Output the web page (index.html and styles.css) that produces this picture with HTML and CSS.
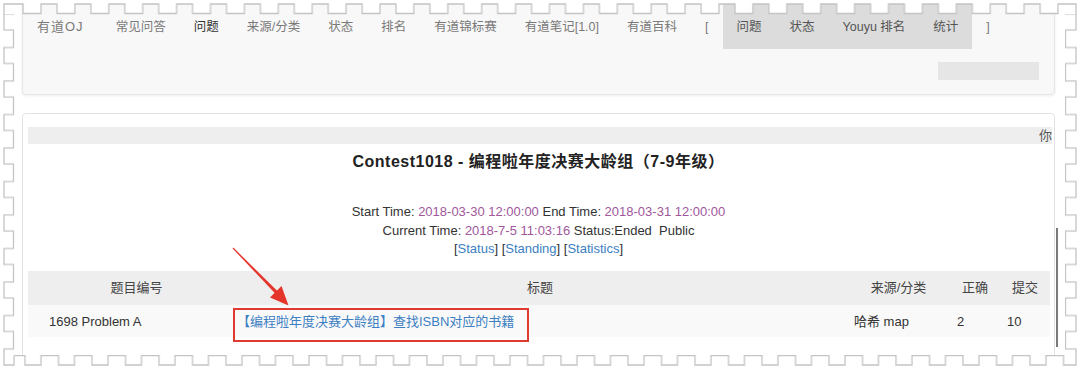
FILE: index.html
```html
<!DOCTYPE html>
<html lang="zh-CN">
<head>
<meta charset="utf-8">
<title>Contest1018</title>
<link rel="stylesheet" href="styles.css">
</head>
<body>
<div class="page">
  <div class="navcard">
    <ul class="nav">
      <li class="brand">有道OJ</li>
      <li>常见问答</li>
      <li class="active">问题</li>
      <li>来源/分类</li>
      <li>状态</li>
      <li>排名</li>
      <li>有道锦标赛</li>
      <li>有道笔记[1.0]</li>
      <li>有道百科</li>
      <li>[</li>
      <li class="group">
        <ul class="subnav">
          <li>问题</li>
          <li>状态</li>
          <li>Youyu 排名</li>
          <li>统计</li>
        </ul>
      </li>
      <li>]</li>
    </ul>
    <div class="navsearch"><div class="searchbar"></div></div>
  </div>

  <div class="card">
    <div class="topbar">你</div>
    <div class="center">
      <h2 class="title">Contest1018 - 编程啦年度决赛大龄组（7-9年级）</h2>
      <div class="info">
        <div>Start Time: <span class="date">2018-03-30 12:00:00</span> End Time: <span class="date">2018-03-31 12:00:00</span></div>
        <div>Current Time: <span class="date">2018-7-5 11:03:16</span> Status:Ended&nbsp; Public</div>
        <div>[<a class="lnk">Status</a>] [<a class="lnk">Standing</a>] [<a class="lnk">Statistics</a>]</div>
      </div>
    </div>
    <div class="ptable">
      <div class="row head">
        <div class="c1">题目编号</div>
        <div class="c2">标题</div>
        <div class="c3">来源/分类</div>
        <div class="c4">正确</div>
        <div class="c5">提交</div>
      </div>
      <div class="row body">
        <div class="c1">1698 Problem A</div>
        <div class="c2"><a class="lnk">【编程啦年度决赛大龄组】查找ISBN对应的书籍</a><span class="mark"></span></div>
        <div class="c3">哈希 map</div>
        <div class="c4">2</div>
        <div class="c5">10</div>
      </div>
    </div>
  </div>
</div>

<div class="scrollline"></div>

<svg class="arrow" width="70" height="70" viewBox="225 240 70 70">
  <polygon points="232.6,248.4 233.4,247.6 280.2,293.8 277.8,296.2" fill="#e5352b"/>
  <polygon points="288.5,305.5 270,297.5 281.5,286" fill="#e5352b"/>
</svg>

<svg class="frame" width="1080" height="370" viewBox="0 0 1080 370">
  <defs>
    <pattern id="ptop" patternUnits="userSpaceOnUse" x="32.05" y="0" width="33.9" height="15">
      <path d="M0 0H33.9V13.5H24.95V4H8.95V13.5H0Z" fill="#fff"/>
      <path d="M0 13.5H8.95V4H24.95V13.5H33.9" fill="none" stroke="#c4c4c4" stroke-width="1.3"/>
    </pattern>
    <pattern id="pbot" patternUnits="userSpaceOnUse" x="16.25" y="355" width="33.5" height="15">
      <path d="M0 0.5H8.75V10H24.75V0.5H33.5V15H0Z" fill="#fff"/>
      <path d="M0 0.5H8.75V10H24.75V0.5H33.5" fill="none" stroke="#c4c4c4" stroke-width="1.3"/>
    </pattern>
    <pattern id="pleft" patternUnits="userSpaceOnUse" x="0" y="5.25" width="15" height="33.5">
      <path d="M0 0H13.5V8.75H4V24.75H13.5V33.5H0Z" fill="#fff"/>
      <path d="M13.5 0V8.75H4V24.75H13.5V33.5" fill="none" stroke="#c4c4c4" stroke-width="1.3"/>
    </pattern>
    <pattern id="pright" patternUnits="userSpaceOnUse" x="1065" y="5.25" width="15" height="33.5">
      <path d="M0.5 0V8.75H11V24.75H0.5V33.5H15V0Z" fill="#fff"/>
      <path d="M0.5 0V8.75H11V24.75H0.5V33.5" fill="none" stroke="#c4c4c4" stroke-width="1.3"/>
    </pattern>
  </defs>
  <rect x="14" y="0" width="1052" height="15" fill="url(#ptop)"/>
  <rect x="14" y="355" width="1052" height="15" fill="url(#pbot)"/>
  <rect x="0" y="14" width="15" height="342" fill="url(#pleft)"/>
  <rect x="1065" y="14" width="15" height="342" fill="url(#pright)"/>
  <path d="M0 0H14V4H4V14H0Z" fill="#fff"/>
  <path d="M14 4H4V14" fill="none" stroke="#c4c4c4" stroke-width="1.3"/>
  <path d="M1066 0H1080V14H1076V4H1066Z" fill="#fff"/>
  <path d="M1066 4H1076V14" fill="none" stroke="#c4c4c4" stroke-width="1.3"/>
  <path d="M0 356H4V365H14V370H0Z" fill="#fff"/>
  <path d="M4 356V365H14V355.5" fill="none" stroke="#c4c4c4" stroke-width="1.3"/>
  <path d="M1076 356V365H1066V370H1080V356Z" fill="#fff"/>
  <path d="M1076 356V365H1066" fill="none" stroke="#c4c4c4" stroke-width="1.3"/>
</svg>
</body>
</html>
```

FILE: styles.css
```css
html, body {
  margin: 0;
  padding: 0;
}

body {
  width: 1080px;
  height: 370px;
  overflow: hidden;
  position: relative;
  background: #fff;
  color: #333;
  font-family: "Liberation Sans", "Noto Sans CJK SC", sans-serif;
  font-size: 13px;
}

.page {
  padding: 0 25px 0 22px;
}

/* ---------- top navigation card ---------- */
.navcard {
  margin-top: -2px;
  background: #f8f8f8;
  border: 1px solid #e6e6e6;
  border-radius: 4px;
  box-shadow: 0 1px 3px rgba(0, 0, 0, 0.07);
  padding-bottom: 14px;
}

.nav,
.subnav {
  display: flex;
  list-style: none;
  margin: 0;
  padding: 0;
  font-size: 12.5px;
}

.nav > li {
  padding: 18px 14px 12px;
  line-height: 20px;
  color: #7a7a7a;
  white-space: nowrap;
}

.nav > li.brand {
  font-size: 13px;
  letter-spacing: 1px;
  padding-right: 18px;
}

.nav > li.active {
  color: #333;
}

.nav > li.group {
  padding: 0;
  background: #dcdcdc;
}

.subnav > li {
  padding: 18px 14px 12px;
  line-height: 20px;
  color: #555;
  white-space: nowrap;
}

.navsearch {
  display: flex;
  justify-content: flex-end;
  padding: 13px 15px 0;
}

.searchbar {
  width: 101px;
  height: 18px;
  background: #e6e6e6;
}

/* ---------- contest card ---------- */
.card {
  margin-top: 18px;
  height: 240px;
  background: #fff;
  border: 1px solid #e3e3e3;
  border-radius: 4px;
  padding: 13px 2px 0 5px;
}

.topbar {
  height: 17px;
  line-height: 17px;
  background: #eee;
  display: flex;
  justify-content: flex-end;
  color: #555;
  font-size: 13px;
}

.center {
  margin-right: 3px;
  text-align: center;
}

.title {
  margin: 8px 0 0;
  font-size: 16px;
  line-height: 20px;
  font-weight: bold;
  letter-spacing: 0.5px;
  color: #222;
}

.info {
  margin-top: 31px;
  line-height: 18.5px;
  font-size: 13px;
  color: #333;
}

.date {
  color: #a0579b;
}

.lnk {
  color: #3c80c2;
  text-decoration: none;
}

/* ---------- problem table ---------- */
.ptable {
  margin: 12px 2px 0 0;
}

.row {
  display: grid;
  grid-template-columns: 205px 614px 103px 50px 1fr;
  line-height: 20px;
}

.row.head {
  background: #eee;
  color: #444;
}

.row.head > div {
  padding: 7px 0;
  text-align: center;
}

.row.head > .c1 {
  padding-left: 12px;
}

.row.body {
  background: #f9f9f9;
}

.row.body > div {
  padding: 7px 0 5px 7px;
}

.row.body > .c1 {
  padding-left: 21px;
}

.row.body > .c2 {
  position: relative;
  padding-left: 4px;
}

.mark {
  position: absolute;
  left: 0;
  top: 3px;
  width: 296px;
  height: 34px;
  box-sizing: border-box;
  border: 2.5px solid #e0392f;
}

/* ---------- overlays ---------- */
.scrollline {
  position: absolute;
  left: 1056px;
  top: 228px;
  width: 1.5px;
  height: 119px;
  background: #7a7a7a;
}

.arrow {
  position: absolute;
  left: 225px;
  top: 240px;
}

.frame {
  position: absolute;
  left: 0;
  top: 0;
  pointer-events: none;
}
```
